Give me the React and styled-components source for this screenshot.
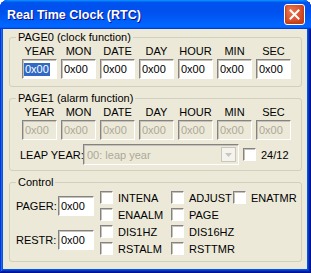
import React from "react";
import styled, { createGlobalStyle } from "styled-components";

const GlobalStyle = createGlobalStyle`
  html, body { margin: 0; padding: 0; background: #ffffff; }
  body { font-family: "Liberation Sans", Arial, sans-serif; font-size: 11px; color: #000; }
  * { box-sizing: border-box; }
`;

const Window = styled.div`
  width: 311px;
  height: 273px;
  display: flex;
  flex-direction: column;
  background: #0055e5;
  border-radius: 8px 8px 0 0;
  box-shadow: inset -1px -1px #00138c, inset 1px 1px #0831d9, inset -2px -2px #001ea0,
    inset 2px 2px #166aee, inset -3px -3px #003bda, inset 3px 3px #0855dd;
`;

const TitleBar = styled.div`
  height: 29px;
  flex: none;
  display: flex;
  align-items: center;
  justify-content: space-between;
  padding: 0 6px 0 7px;
  border-radius: 8px 8px 0 0;
  background: linear-gradient(180deg, #0997ff, #0053ee 8%, #0050ee 40%, #0066ff 88%, #0066ff 93%, #005bff 95%, #003dd7 96%, #003dd7);
`;

const Title = styled.span`
  color: #fff;
  font-weight: bold;
  font-size: 12.5px;
  text-shadow: 1px 1px #0f1089;
  padding-top: 1px;
`;

const CloseButton = styled.button`
  width: 21px;
  height: 21px;
  padding: 0;
  display: flex;
  align-items: center;
  justify-content: center;
  border: 1px solid #fff;
  border-radius: 3px;
  background: radial-gradient(circle at 30% 30%, #e8764f 0%, #d9502d 55%, #c33712 100%);
  box-shadow: inset 0 -1px 2px 1px #c03f12;
`;

const Body = styled.div`
  flex: 1;
  margin: 0 4px 4px 3px;
  background: #ece9d8;
  padding: 2px 5px 0 6px;
  display: flex;
  flex-direction: column;
  gap: 5px;
`;

const Group = styled.fieldset`
  margin: 0;
  padding: 0;
  min-width: 0;
  border: 1px solid #d0d0bf;
  border-radius: 3px;
`;

const Legend = styled.legend`
  margin-left: 6px;
  padding: 0 2px;
  font-size: 11px;
  line-height: 12px;
  color: #000;
`;

const GroupContent = styled.div`
  padding: ${(p) => p.$pad};
  display: flex;
  flex-direction: column;
`;

const FieldGrid = styled.div`
  display: grid;
  grid-template-columns: repeat(7, 35px);
  column-gap: 4px;
  row-gap: 1px;
`;

const ColLabel = styled.div`
  text-align: center;
  line-height: 13px;
`;

const Field = styled.div`
  height: 20px;
  width: ${(p) => p.$w || "35px"};
  display: flex;
  align-items: center;
  padding-left: 2px;
  background: ${(p) => (p.$disabled ? "#ece9d8" : "#fff")};
  color: ${(p) => (p.$disabled ? "#aca899" : "#000")};
  border-style: solid;
  border-width: 1px;
  border-color: #848284 #fff #fff #848284;
  box-shadow: inset 1px 1px #c6c3b6;
  white-space: nowrap;
`;

const Selected = styled.span`
  background: #316ac5;
  color: #fff;
  line-height: 13px;
  padding: 0 1px;
  margin-left: -1px;
`;

const LeapRow = styled.div`
  display: flex;
  align-items: center;
  margin-top: 4px;
  height: 21px;
  white-space: nowrap;
`;

const LeapLabel = styled.span`
  margin-left: -2px;
  width: 63px;
  flex: none;
`;

const Combo = styled.div`
  width: 156px;
  flex: none;
  height: 21px;
  display: flex;
  align-items: center;
  justify-content: space-between;
  padding: 0 2px 0 3px;
  background: #ece9d8;
  color: #aca899;
  border-style: solid;
  border-width: 1px;
  border-color: #848284 #fff #fff #848284;
  box-shadow: inset 1px 1px #c6c3b6;
`;

const DropButton = styled.div`
  width: 15px;
  height: 15px;
  display: flex;
  align-items: center;
  justify-content: center;
  background: #f4f3ee;
  border: 1px solid #c9c7ba;
`;

const Check = styled.span`
  width: 13px;
  height: 13px;
  flex: none;
  background: #fff;
  border-style: solid;
  border-width: 1px;
  border-color: #848284 #fff #fff #848284;
  box-shadow: inset 1px 1px #c6c3b6;
`;

const CheckItem = styled.label`
  display: flex;
  align-items: center;
  gap: 5px;
  height: 17px;
  white-space: nowrap;
  margin-left: ${(p) => p.$ml || "0"};
  grid-column: ${(p) => p.$col};
  grid-row: ${(p) => p.$row};
`;

const ControlRow = styled.div`
  display: flex;
  padding: 1px 0 4px 6px;
`;

const RegColumn = styled.div`
  display: grid;
  grid-template-rows: 34px 34px;
  width: 84px;
  flex: none;
`;

const RegRow = styled.div`
  display: flex;
  align-items: center;
  gap: 2px;
`;

const RegLabel = styled.span`
  width: 40px;
`;

const CheckGrid = styled.div`
  display: grid;
  grid-template-columns: 71px 62px auto;
  grid-template-rows: repeat(4, 17px);
`;

const Arrow = () => (
  <svg width="7" height="4" viewBox="0 0 7 4">
    <path d="M0 0h7L3.5 4z" fill="#c9c7ba" />
  </svg>
);

const CloseIcon = () => (
  <svg width="11" height="11" viewBox="0 0 11 11">
    <path d="M1.5 1.5l8 8M9.5 1.5l-8 8" stroke="#fff" strokeWidth="2" strokeLinecap="square" />
  </svg>
);

const cols = ["YEAR", "MON", "DATE", "DAY", "HOUR", "MIN", "SEC"];

export default function App() {
  return (
    <>
      <GlobalStyle />
      <Window>
        <TitleBar>
          <Title>Real Time Clock (RTC)</Title>
          <CloseButton aria-label="Close">
            <CloseIcon />
          </CloseButton>
        </TitleBar>
        <Body>
          <Group>
            <Legend>PAGE0 (clock function)</Legend>
            <GroupContent $pad="2px 0 7px 12px">
              <FieldGrid>
                {cols.map((c) => (
                  <ColLabel key={c}>{c}</ColLabel>
                ))}
                {cols.map((c, i) => (
                  <Field key={c}>{i === 0 ? <Selected>0x00</Selected> : "0x00"}</Field>
                ))}
              </FieldGrid>
            </GroupContent>
          </Group>
          <Group>
            <Legend>PAGE1 (alarm function)</Legend>
            <GroupContent $pad="2px 0 5px 12px">
              <FieldGrid>
                {cols.map((c) => (
                  <ColLabel key={c}>{c}</ColLabel>
                ))}
                {cols.map((c) => (
                  <Field key={c} $disabled>
                    0x00
                  </Field>
                ))}
              </FieldGrid>
              <LeapRow>
                <LeapLabel>LEAP YEAR:</LeapLabel>
                <Combo>
                  <span>00: leap year</span>
                  <DropButton>
                    <Arrow />
                  </DropButton>
                </Combo>
                <CheckItem $ml="4px">
                  <Check />
                  24/12
                </CheckItem>
              </LeapRow>
            </GroupContent>
          </Group>
          <Group>
            <Legend>Control</Legend>
            <ControlRow>
              <RegColumn>
                <RegRow>
                  <RegLabel>PAGER:</RegLabel>
                  <Field $w="36px">0x00</Field>
                </RegRow>
                <RegRow>
                  <RegLabel>RESTR:</RegLabel>
                  <Field $w="36px">0x00</Field>
                </RegRow>
              </RegColumn>
              <CheckGrid>
                <CheckItem $col={1} $row={1}><Check />INTENA</CheckItem>
                <CheckItem $col={1} $row={2}><Check />ENAALM</CheckItem>
                <CheckItem $col={1} $row={3}><Check />DIS1HZ</CheckItem>
                <CheckItem $col={1} $row={4}><Check />RSTALM</CheckItem>
                <CheckItem $col={2} $row={1}><Check />ADJUST</CheckItem>
                <CheckItem $col={2} $row={2}><Check />PAGE</CheckItem>
                <CheckItem $col={2} $row={3}><Check />DIS16HZ</CheckItem>
                <CheckItem $col={2} $row={4}><Check />RSTTMR</CheckItem>
                <CheckItem $col={3} $row={1}><Check />ENATMR</CheckItem>
              </CheckGrid>
            </ControlRow>
          </Group>
        </Body>
      </Window>
    </>
  );
}
